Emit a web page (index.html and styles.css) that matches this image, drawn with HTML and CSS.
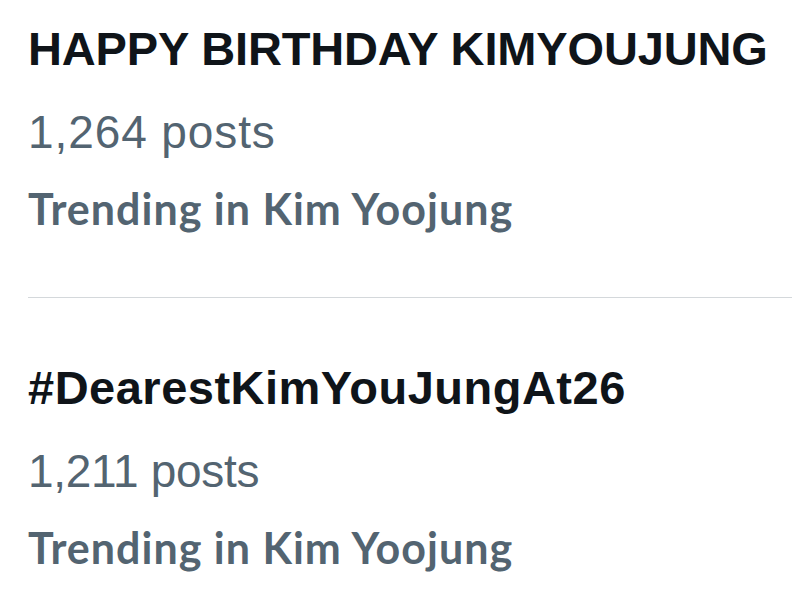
FILE: index.html
```html
<!DOCTYPE html>
<html>
<head>
<meta charset="utf-8">
<link rel="stylesheet" href="styles.css">
</head>
<body>
<div class="list">
  <div class="trend">
    <div class="title">HAPPY BIRTHDAY KIMYOUJUNG</div>
    <div class="count">1,264 posts</div>
    <div class="meta">Trending in Kim Yoojung</div>
  </div>
  <div class="divider"></div>
  <div class="trend second">
    <div class="title">#DearestKimYouJungAt26</div>
    <div class="count">1,211 posts</div>
    <div class="meta">Trending in Kim Yoojung</div>
  </div>
</div>
</body>
</html>
```
FILE: styles.css
```css
html, body {
  margin: 0;
  padding: 0;
  background: #ffffff;
}
.list {
  display: flex;
  flex-direction: column;
  padding-left: 28px;
}
.trend {
  display: flex;
  flex-direction: column;
}
.title {
  font-family: "Liberation Sans", Arial, sans-serif;
  font-weight: 700;
  font-size: 47px;
  line-height: 82px;
  letter-spacing: -0.15px;
  color: #0f1419;
  margin-top: 8px;
  white-space: nowrap;
}
.count {
  font-family: "Liberation Sans", Arial, sans-serif;
  font-size: 46px;
  line-height: 84px;
  letter-spacing: 0.9px;
  color: #536471;
}
.meta {
  font-family: Lato, sans-serif;
  font-weight: 700;
  font-size: 43px;
  line-height: 69px;
  letter-spacing: 1px;
  color: #536471;
}
.divider {
  height: 1px;
  background: #d4d8db;
  margin-top: 54px;
}
.second .title {
  margin-top: 49px;
  letter-spacing: 0.5px;
}
.second .count {
  letter-spacing: -0.3px;
}
```
